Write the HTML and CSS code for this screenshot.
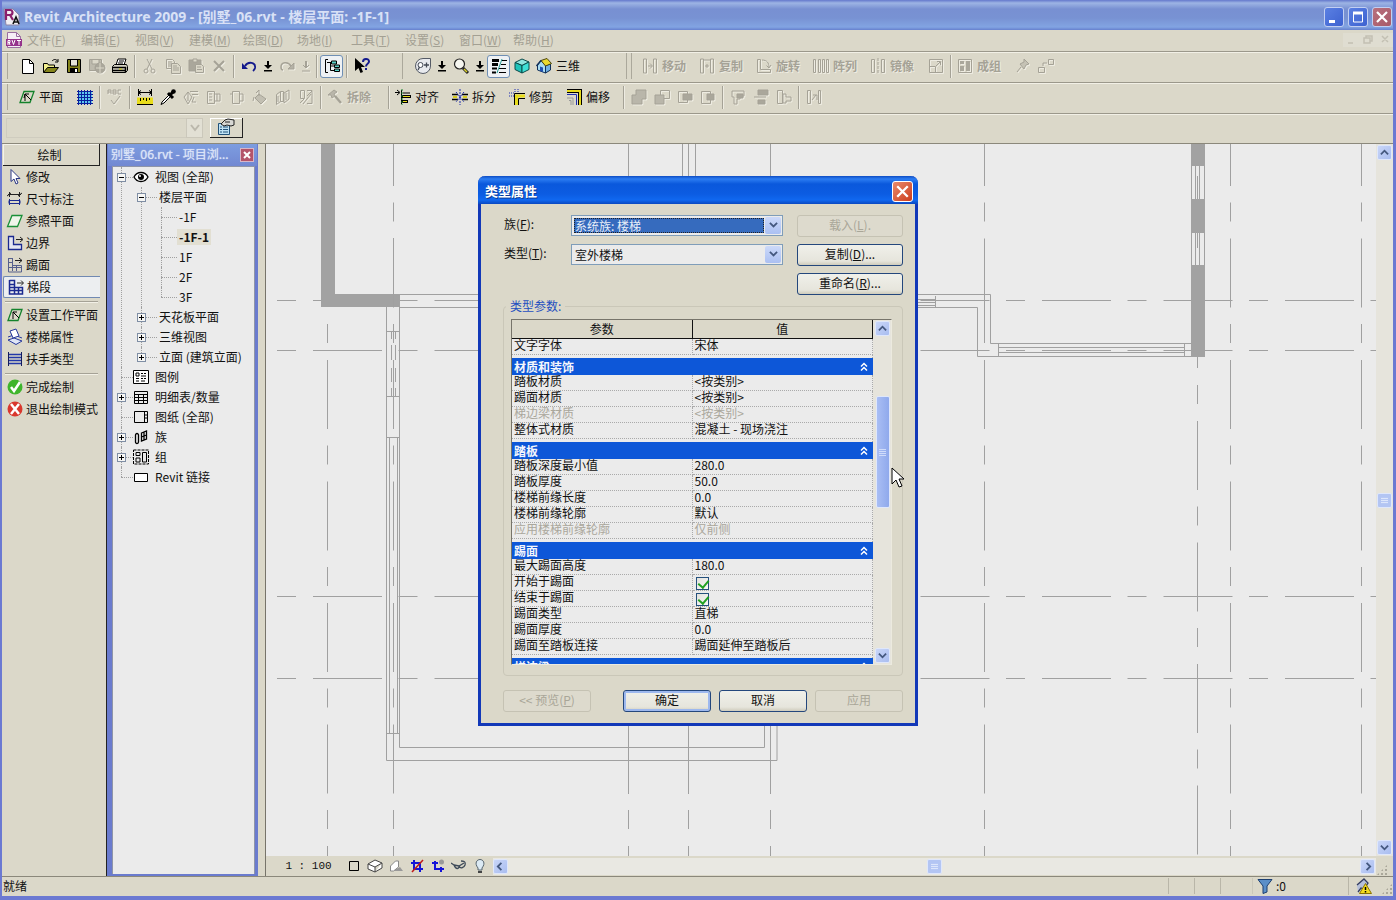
FILE: index.html
```html
<!DOCTYPE html>
<html lang="zh-CN">
<head>
<meta charset="utf-8">
<title>Revit Architecture 2009</title>
<link rel="stylesheet" href="styles.css">
</head>
<body>
<div class="app">
  <header class="titlebar">
    <svg class="ic" viewBox="0 0 18 18"><path d="M1 1h9l6 6v10H3z" fill="#f2f0f4" stroke="#8d86a8"/><path d="M3 12V2h4a2.500 2.500 0 0 1 0 5H3m4 0l3 5" fill="none" stroke="#8c1f6c" stroke-width="2.200"/><path d="M10 16l3-7 3 7m-5-2h4" fill="none" stroke="#111" stroke-width="1.600"/></svg>
    <h1>Revit Architecture 2009 - [别墅_06.rvt - 楼层平面: -1F-1]</h1>
    <button class="winbtn" aria-label="最小化"><svg viewBox="0 0 18 18"><path d="M4 13.500h6" stroke="#fff" stroke-width="3"/></svg></button>
    <button class="winbtn" aria-label="最大化"><svg viewBox="0 0 18 18"><path d="M4.500 5v9h9V5z" fill="none" stroke="#fff"/><path d="M4 5h10" stroke="#fff" stroke-width="3"/></svg></button>
    <button class="winbtn close" aria-label="关闭"><svg viewBox="0 0 18 18"><path d="M4 4l10 10M14 4L4 14" stroke="#fff" stroke-width="2.200"/></svg></button>
  </header>

  <nav class="menubar">
    <svg class="ic" viewBox="0 0 18 18"><path d="M2.500 1.500h9l4 4v11h-13z" fill="#f6eef6" stroke="#9a6fa0"/><path d="M11.500 1.500v4h4" fill="none" stroke="#9a6fa0"/><path d="M1 8h16v7H1z" fill="#96328c"/><path d="M3 14V9.500h2v2H3m1 0l1 2.500M7 9l1.500 4.500L10 9m2 .5h4m-2 0V14" stroke="#fff" fill="none"/></svg>
    <button>文件(<u>F</u>)</button><button>编辑(<u>E</u>)</button><button>视图(<u>V</u>)</button><button>建模(<u>M</u>)</button><button>绘图(<u>D</u>)</button><button>场地(<u>I</u>)</button><button>工具(<u>T</u>)</button><button>设置(<u>S</u>)</button><button>窗口(<u>W</u>)</button><button>帮助(<u>H</u>)</button>
    <span class="mdi">
      <svg viewBox="0 0 50 14"><path d="M5 10h5M21 5h6v5h-6zM23 5V3h6v5h-2M39 3l6 6M45 3l-6 6" fill="none" stroke="#c3c0b3" stroke-width="1.500"/></svg>
    </span>
  </nav>

  <div class="toolbar">
    <div class="group first">
      <button aria-label="新建"><svg class="ic" viewBox="0 0 18 18"><path d="M3.500 2.500h7l4 4v10h-11z" fill="#fff" stroke="#000"/><path d="M10.500 2.500v4h4" fill="none" stroke="#000"/></svg></button>
      <button aria-label="打开"><svg class="ic" viewBox="0 0 18 18"><path d="M1.500 15.500v-9h4l1 1.500h6v3" fill="#f3ef8e" stroke="#000"/><path d="M1.500 15.500l4-5h11l-4 5z" fill="#85851c" stroke="#000"/><path d="M10 4c2-2 4-2 5.500 0M16 2v3h-3" fill="none" stroke="#000"/></svg></button>
      <button aria-label="保存"><svg class="ic" viewBox="0 0 18 18"><path d="M2.500 2.500h13v13h-13z" fill="#85851c" stroke="#000"/><path d="M5 3h8v6H5z" fill="#e5e4da"/><path d="M5 11h8v5H5z" fill="#000"/><path d="M10 12h2v3h-2z" fill="#fff"/><path d="M5.500 3v6h7V3" fill="none" stroke="#000"/></svg></button>
      <button class="off" aria-label="保存到中心"><svg class="ic" viewBox="0 0 18 18"><path d="M1.500 2.500h12v11h-12z" fill="#bdbaad"/><path d="M4 3v4h7V3" fill="#dbd8c9"/><circle cx="12" cy="11" r="5" fill="#aaa79b"/><path d="M8 11h8M12 6v10" stroke="#dbd8c9"/></svg></button>
      <button aria-label="打印"><svg class="ic" viewBox="0 0 18 18"><path d="M5 8l2-6h8l-2 6" fill="#fff" stroke="#000"/><path d="M8 4h5M7 6h5" stroke="#000"/><path d="M1.500 9.500l2-2h12l1 2v4l-2 2h-13z" fill="#d7d4c6" stroke="#000"/><path d="M1.500 10.500h13v5M2 13.500h12" fill="none" stroke="#000" stroke-width="1.500"/><path d="M8 12h3" stroke="#c8c400"/></svg></button>
      <i class="sep"></i>
      <button class="off" aria-label="剪切"><svg class="ic" viewBox="0 0 18 18"><path d="M6 2l5 10M11 2L6 12"/><circle cx="5" cy="14" r="2"/><circle cx="12" cy="14" r="2"/></svg></button>
      <button class="off" aria-label="复制"><svg class="ic" viewBox="0 0 18 18"><path d="M2.500 2.500h6l2 2v7h-8zM4 5h4M4 7h4M4 9h4"/><path d="M7.500 6.500h6l3 3v7h-9z" fill="#dbd8c9"/><path d="M9 9h4M9 11h6M9 13h6"/></svg></button>
      <button class="off" aria-label="粘贴"><svg class="ic" viewBox="0 0 18 18"><path d="M2 3h12v11H2z" fill="#aaa79b"/><path d="M6 2h4v3H6z" fill="#dbd8c9"/><path d="M8.500 7.500h6l2 2v6h-8z" fill="#dbd8c9"/><path d="M10 10h4M10 12.500h5"/></svg></button>
      <button class="off" aria-label="删除"><svg class="ic" viewBox="0 0 18 18"><path d="M4 4l10 10M14 4L4 14" stroke-width="2"/></svg></button>
      <i class="sep"></i>
      <button aria-label="放弃"><svg class="ic" viewBox="0 0 18 18"><path d="M5 9c3-5 11-4 10 2-.3 1.500-1 2-2 3" fill="none" stroke="#141a8c" stroke-width="1.800"/><path d="M2 6v6h6z" fill="#141a8c"/></svg></button>
      <button class="arr" aria-label="放弃列表"><svg class="dn" viewBox="0 0 10 12"><path d="M5 1v6" stroke="#000" stroke-width="2"/><path d="M1 5h8L5 9zM1 10h8v1.500H1z"/></svg></button>
      <button class="off" aria-label="重做"><svg class="ic" viewBox="0 0 18 18"><path d="M13 9c-3-5-10-4-10 1 0 2 1 3 2 3" stroke-width="1.500"/><path d="M16 6v6h-6z" fill="#b5b2a6"/></svg></button>
      <button class="arr off" aria-label="重做列表"><svg class="dn" viewBox="0 0 10 12"><path d="M5 1v6" stroke-width="2"/><path d="M2 5l3 3 3-3M1 11h8"/></svg></button>
      <i class="sep"></i>
      <button class="on" aria-label="项目浏览器"><svg class="ic" viewBox="0 0 18 18"><path d="M5 2.500H2.500v13H5M4 5.500h6M7.500 5.500v8h4M7.500 9h4" fill="none" stroke="#000"/><path d="M8.500 4h5v3h-5zM11.500 8h5v2.500h-5zM11.500 12h5v2.500h-5z" fill="#5ad0c8" stroke="#000"/></svg></button>
      <i class="sep"></i>
      <button aria-label="帮助"><svg class="ic" viewBox="0 0 18 18"><path d="M2 1v13l3.500-3 2 5 2.500-1-2-5h4z" fill="#000"/><path d="M10 5c0-4 6-4 6-.5 0 2.500-3 2-3 5M13 11v2" fill="none" stroke="#141a8c" stroke-width="2"/></svg></button>
    </div>
    <div class="group views">
      <button aria-label="导航控制盘"><svg class="ic" viewBox="0 0 18 18"><path d="M9 1.500h7.500V9A7.500 7.500 0 1 1 9 1.500z" fill="#e8eaee" stroke="#555b66"/><circle cx="6.500" cy="8" r="2.500" fill="#fff" stroke="#444a55"/><path d="M4 13l1.500-3M10 8h5M12.500 5.500v5" stroke="#444a55" stroke-width="1.300"/></svg></button>
      <button class="arr" aria-label="控制盘列表"><svg class="dn" viewBox="0 0 10 12"><path d="M5 1v6" stroke="#000" stroke-width="2"/><path d="M1 5h8L5 9zM1 10h8v1.500H1z"/></svg></button>
      <button aria-label="缩放"><svg class="ic" viewBox="0 0 18 18"><circle cx="7.500" cy="7" r="5" fill="#f6f6f0" stroke="#222" stroke-width="1.200"/><path d="M11 11l5 5" stroke="#222" stroke-width="3"/><path d="M12 12l3 3" stroke="#d8cf2a" stroke-width="1.500"/></svg></button>
      <button class="arr" aria-label="缩放列表"><svg class="dn" viewBox="0 0 10 12"><path d="M5 1v6" stroke="#000" stroke-width="2"/><path d="M1 5h8L5 9zM1 10h8v1.500H1z"/></svg></button>
      <button class="on" aria-label="细线"><svg class="ic" viewBox="0 0 18 18"><path d="M2 3.500h7M2 7.500h6" stroke="#000" stroke-width="3"/><path d="M2 11.500h5M2 15.500h4" stroke="#000" stroke-width="2"/><path d="M11 3.500h6M11 7.500h5M9 11.500h7M9 15.500h7" stroke="#000"/><path d="M12 2L7 16" stroke="#2a9c94"/></svg></button>
      <button aria-label="默认三维视图"><svg class="ic" viewBox="0 0 18 18"><path d="M2 5.500L9 2l7 3-7 3.500z" fill="#8fe6e0" stroke="#0b4a4a"/><path d="M2 5.500l7 3V16l-7-3.500z" fill="#1fc4ba" stroke="#0b4a4a"/><path d="M9 8.500L16 5v7.500L9 16z" fill="#3fe0d6" stroke="#0b4a4a"/></svg></button>
      <button class="lab"><svg class="ic" viewBox="0 0 18 18"><path d="M2.500 8L6 3.500l4.500 5V16l-8-3z" fill="#a9dcf2" stroke="#10305a"/><path d="M10.500 8.500L15.500 7v6l-5 3z" fill="#6fb0e2" stroke="#10305a"/><path d="M6 3.500L12 1.500l4.500 5-6 2.500z" fill="#ead92e" stroke="#4a4410"/><path d="M1.500 9L6 3.500" stroke="#10305a" stroke-width="1.500"/><path d="M5 9.500l3 1v4.500l-3-1z" fill="#1f50b0"/></svg>三维</button>
    </div>
    <div class="group edit">
      <button class="lab off"><svg class="ic" viewBox="0 0 18 18"><path d="M2.500 2v14h3V2zM12.500 2v14h3V2zM7 9h4M9 6.500L11.500 9 9 11.500"/></svg>移动</button>
      <button class="lab off"><svg class="ic" viewBox="0 0 18 18"><path d="M2.500 2v14h3V2zM12.500 2v14h3V2zM7 9h4M9 7v4M6 3h6"/></svg>复制</button>
      <button class="lab off"><svg class="ic" viewBox="0 0 18 18"><path d="M2.500 2.500h3v10h10v3h-13zM7 3c5 0 7 3 7 7M11.500 8.500L14 11l2-3"/></svg>旋转</button>
      <button class="lab off"><svg class="ic" viewBox="0 0 18 18"><path d="M1.500 2.500h2v13h-2zM6.500 2.500h2v13h-2zM10.500 2.500h2v13h-2zM14.500 2.500h2v13h-2z"/></svg>阵列</button>
      <button class="lab off"><svg class="ic" viewBox="0 0 18 18"><path d="M2.500 2.500h3v13h-3zM12.500 2.500h3v13h-3z"/><path d="M9 1v16" stroke-dasharray="3 1"/></svg>镜像</button>
      <button class="off" aria-label="缩放比例"><svg class="ic" viewBox="0 0 18 18"><path d="M2.500 2.500h13v13h-13zM2.500 9.500h6v6M9 9l4-4M10 4.500h3.500V8"/></svg></button>
      <i class="sep"></i>
      <button class="lab off"><svg class="ic" viewBox="0 0 18 18"><path d="M2.500 2.500h13v13h-13z"/><path d="M4 4h4v3H4zM4 9h4v5H4zM10 4h4v10h-4z" fill="#aaa79b" stroke="none"/></svg>成组</button>
      <button class="off" aria-label="锁定"><svg class="ic" viewBox="0 0 18 18"><path d="M10 2l5 5-3 1-2 4-4-5 4-2z" fill="#c5c2b5"/><path d="M7 10l-4 5"/></svg></button>
      <button class="off" aria-label="链接"><svg class="ic" viewBox="0 0 18 18"><path d="M1.500 10.500h6v5h-6zM11.500 2.500h5v5h-5zM6 9V6h4"/></svg></button>
    </div>
  </div>

  <div class="toolbar">
    <div class="group first two">
      <button class="lab"><svg class="ic" viewBox="0 0 18 18"><path d="M6 3.500h10l-4 11H2z" fill="none" stroke="#14822c" stroke-width="1.300"/><path d="M7 13V6m0 0l6 6M7 6h4M7 6l-1 4" stroke="#000" fill="none"/></svg>平面</button>
      <button aria-label="网格"><svg class="ic" viewBox="0 0 18 18"><path d="M2 3h14v12H2z" fill="#5fc8f0"/><path d="M1 3.500h16M1 6.500h16M1 9.500h16M1 12.500h16M1 15.500h16M2.500 2v15M5.500 2v15M8.500 2v15M11.500 2v15M14.500 2v15" stroke="#0a1f9c"/></svg></button>
      <i class="sep"></i>
      <button class="off" aria-label="拼写检查"><svg class="ic" viewBox="0 0 18 18"><path d="M2 6V2h3v4M2 4h3M7 2h3v4H7zM7 4h3M15 2h-3v4h3M5 12l3 4 6-8"/></svg></button>
      <i class="sep"></i>
      <button aria-label="测量"><svg class="ic" viewBox="0 0 18 18"><path d="M1 9.500h16v7H1z" fill="#e8dc1c"/><path d="M2.500 1v7M15.500 1v7M2 4.500h14M5 2.500l-3 2 3 2M13 2.500l3 2-3 2M1 16.500h16M4.500 10v3M7.500 10v2M10.500 10v3M13.500 10v2" fill="none" stroke="#000"/></svg></button>
      <button aria-label="匹配类型"><svg class="ic" viewBox="0 0 18 18"><path d="M10 7L3 14l-1 2.500L5 15l7-7" fill="#fff" stroke="#000"/><path d="M9 5l5 5M11 7l4-4" stroke="#000" stroke-width="3"/><circle cx="14.500" cy="3.500" r="2.300"/></svg></button>
      <button class="off" aria-label="连接端切割"><svg class="ic" viewBox="0 0 18 18"><path d="M2 9l4-5 4 5-4 7zM8 3.500h8M10 6.500h6M6 4v9M12 9l-2 5h4"/></svg></button>
      <button class="off" aria-label="剖切面"><svg class="ic" viewBox="0 0 18 18"><path d="M2.500 3.500h7v12h-7zM10 6h5v7h-5M12 6v7M4 6h3M4 9h3M4 12h3"/></svg></button>
      <button class="off" aria-label="线处理"><svg class="ic" viewBox="0 0 18 18"><path d="M4.500 3.500h7v12h-7zM12 6h3v7h-3M2 6h2"/></svg></button>
      <button class="off" aria-label="填色"><svg class="ic" viewBox="0 0 18 18"><path d="M8 6l7 5-5 5-6-6z" fill="#c2bfb2"/><path d="M8 8V2L5 5M3 9l-1 4"/></svg></button>
      <button class="off" aria-label="拆分面"><svg class="ic" viewBox="0 0 18 18"><path d="M2.500 6.500l4-3v10l-4 3zM6.500 3.500h3v10h-3M10 5l5-3v9l-5 4zM4 8v6M12 5v7"/></svg></button>
      <button class="off" aria-label="贴花"><svg class="ic" viewBox="0 0 18 18"><path d="M3.500 2.500h4v8h-4zM10 2.500h5v13h-5M3 15l4-4M6 16l8-10M10 8l5-5"/></svg></button>
      <i class="sep"></i>
      <button class="lab off"><svg class="ic" viewBox="0 0 18 18"><path d="M2 7l6-5 3 2-3 2 1 2-3 2-1-3z" fill="#b9b6aa"/><path d="M9 8l6 7" stroke-width="2.500"/></svg>拆除</button>
    </div>
    <i class="sep"></i>
    <div class="group plain">
      <button class="lab"><svg class="ic" viewBox="0 0 18 18"><path d="M1 4.500h4M3 2l3 2.500L3 7M7.500 2v14M9 5h7" fill="none" stroke="#000"/><path d="M8 8.500h9M8 13.500h6" stroke="#000" stroke-width="3"/><path d="M9 8.500h7M9 13.500h4" stroke="#e8dc1c"/><path d="M8 1v16" stroke="#14822c" stroke-dasharray="2 1"/></svg>对齐</button>
      <button class="lab"><svg class="ic" viewBox="0 0 18 18"><path d="M1 6.500h6M1 11.500h6M11 6.500h6M11 11.500h6" stroke="#000" stroke-width="1.500"/><path d="M2 9h4M12 9h4" stroke="#d8cc1c" stroke-width="2"/><path d="M9 1v16M5 4l8 10M13 4L5 14" stroke="#1f2fb0" stroke-dasharray="2 1"/></svg>拆分</button>
      <button class="lab"><svg class="ic" viewBox="0 0 18 18"><path d="M6.500 17V5.500H17M10.500 17v-6.500H17" fill="none" stroke="#000"/><path d="M8.500 17V8H17" fill="none" stroke="#e8dc1c" stroke-width="3"/><path d="M1 5h6M1 8h5M7 1v4M10 1v4" stroke="#1f2fb0" stroke-dasharray="1 1"/></svg>修剪</button>
      <button class="lab"><svg class="ic" viewBox="0 0 18 18"><path d="M2 3h13v14" fill="none" stroke="#000" stroke-width="4"/><path d="M2 3h13v14" fill="none" stroke="#e8dc1c" stroke-width="2"/><path d="M2 6.500h9.500V17" fill="none" stroke="#1f2fb0"/><path d="M2 10h6v7M4 12.500h2V17" fill="none" stroke="#999"/></svg>偏移</button>
    </div>
    <i class="sep"></i>
    <div class="group plain off">
      <button class="off" aria-label="连接几何图形"><svg class="ic" viewBox="0 0 18 18"><path d="M6 2h10v9h-4v5H2V7h4z" fill="#b9b6aa"/></svg></button>
      <button class="off" aria-label="取消连接"><svg class="ic" viewBox="0 0 18 18"><path d="M2 7h9v9H2z" fill="#b9b6aa"/><path d="M7.500 7V2.500h9v8H11"/></svg></button>
      <button class="off" aria-label="切割"><svg class="ic" viewBox="0 0 18 18"><path d="M2.500 3.500h9v11h-9z"/><path d="M7 6h9v6H7z" fill="#aaa79b"/></svg></button>
      <button class="off" aria-label="取消切割"><svg class="ic" viewBox="0 0 18 18"><path d="M2.500 3.500h9v12h-9z"/><path d="M8 6h7v6H8z" fill="#aaa79b"/></svg></button>
      <i class="sep"></i>
      <button class="off" aria-label="墙连接"><svg class="ic" viewBox="0 0 18 18"><path d="M3 3h12v5h-4v3H8v5H5V9H3z"/><path d="M8 6h6v4H8z" fill="#aaa79b"/></svg></button>
      <button class="off" aria-label="附着"><svg class="ic" viewBox="0 0 18 18"><path d="M6 2h10v5H6zM6 12h7v4H6z" fill="#aaa79b"/><path d="M2 9h12"/></svg></button>
      <button class="off" aria-label="分离"><svg class="ic" viewBox="0 0 18 18"><path d="M2.500 2.500h5v13h-5zM8 6h3v3l5 0v4h-5v2H8z"/></svg></button>
      <i class="sep"></i>
      <button class="off" aria-label="间隙"><svg class="ic" viewBox="0 0 18 18"><path d="M2.500 2.500h3v13h-3zM13.500 2.500h2v13h-2zM7 12l4-5M8 7h4v5"/></svg></button>
    </div>
  </div>

  <div class="optionsbar">
    <select disabled aria-label="类型选择器"><option></option></select>
    <span class="chev"><svg viewBox="0 0 10 8"><path d="M1 1l4 5 4-5" fill="none" stroke="#bbb8ac" stroke-width="2"/></svg></span>
    <button class="props" aria-label="属性"><svg class="ic" viewBox="0 0 18 18"><path d="M1.500 5.500h11v11h-11z" fill="#bfe2f4" stroke="#22527a"/><path d="M3 9h2M6 9h5M3 11.500h2M6 11.500h5M3 14h2M6 14h5" stroke="#22527a"/><path d="M4 6l4-4 3-1 6 1v5l-3 1-4-1-3 1z" fill="#d8d8d4" stroke="#222"/><path d="M8 4h5" stroke="#222"/></svg></button>
  </div>

  <main class="work">
    <aside class="design">
      <h2>绘制</h2>
      <button><svg class="ic" viewBox="0 0 18 18"><path d="M5 1.500v12l3-2.500 2 5 2-1-2-4.500h4z" fill="#fff" stroke="#2a3684"/></svg>修改</button>
      <button><svg class="ic" viewBox="0 0 18 18"><path d="M2 4.500h13M3.500 2v5M13.500 2v5M1 6l4-3M12 6l4-3" stroke="#222" fill="none"/><path d="M3.500 9v6M13.500 9v6M3 10.500h11v3H3z" stroke="#1b2a90" fill="none"/></svg>尺寸标注</button>
      <button><svg class="ic" viewBox="0 0 18 18"><path d="M6 3.500h10l-4.500 11h-10z" fill="#f0f5ea" stroke="#1a9038" stroke-width="1.300"/></svg>参照平面</button>
      <button><svg class="ic" viewBox="0 0 18 18"><path d="M2.500 2.500h5v8h8v5h-13z" fill="#e4e6f2" stroke="#1b2a90" stroke-width="1.300"/><path d="M10 5.500h6M14 3l3 2.500L14 8" fill="none" stroke="#222"/></svg>边界</button>
      <button><svg class="ic" viewBox="0 0 18 18"><path d="M2.500 2v14h13V9.500h-9V2M2 6.500h4M2 11.500h13M10.500 9v6M6.500 9v6M3 2.500h4" fill="none" stroke="#56608c"/><path d="M9 4.500h7M13 2l3 2.500-3 2.500" fill="none" stroke="#222"/></svg>踢面</button>
      <button class="sel"><svg class="ic" viewBox="0 0 18 18"><path d="M2.500 2v14h13V9.500h-8V2.500h-5M2 6.500h5M2 9.500h5M2 12.500h13M7.500 9v7M11.500 9v7" fill="none" stroke="#1b2a90" stroke-width="1.500"/><path d="M10 5h6M14 2.500L16.500 5 14 7.500" fill="none" stroke="#222"/></svg>梯段</button>
      <hr>
      <button><svg class="ic" viewBox="0 0 18 18"><path d="M6 3.500h10l-4 11H2z" fill="none" stroke="#14822c" stroke-width="1.300"/><path d="M7 13V6m0 0l6 6M7 6h4" stroke="#000" fill="none"/></svg>设置工作平面</button>
      <button><svg class="ic" viewBox="0 0 18 18"><path d="M2 12l6-2 8 3-6 3.500zM2 9l6-2 8 3" fill="#dfe6f6" stroke="#26389c"/><path d="M4 3l6-2 3 7-6 2z" fill="#fff" stroke="#26389c"/></svg>楼梯属性</button>
      <button><svg class="ic" viewBox="0 0 18 18"><path d="M2 4.500h14M2 7.500h14M2 10.500h14M2 13.500h14" stroke="#2338a8" stroke-width="1.500"/><path d="M2.500 2v14M15.500 2v14" stroke="#141c5c"/></svg>扶手类型</button>
      <hr>
      <button><svg class="ic" viewBox="0 0 18 18"><circle cx="9" cy="9" r="7.500" fill="#3fb52c"/><path d="M5 9l3 4 6-9" fill="none" stroke="#fff" stroke-width="2.500"/></svg>完成绘制</button>
      <button><svg class="ic" viewBox="0 0 18 18"><circle cx="9" cy="9" r="7.500" fill="#d9382e"/><path d="M5 4l8 10M13 4L5 14" stroke="#fff" stroke-width="2.500"/></svg>退出绘制模式</button>
    </aside>

    <aside class="browser">
      <header><h2>别墅_06.rvt - 项目浏...</h2><button aria-label="关闭"><svg viewBox="0 0 12 12"><path d="M3 3l6 6M9 3L3 9" stroke="#fff" stroke-width="2"/></svg></button></header>
      <ul class="tree">
        <li><div class="row"><button class="tg open" aria-label="折叠"></button><svg class="ti" viewBox="0 0 16 16"><path d="M1 8c3-6 11-6 14 0-3 6-11 6-14 0z" fill="#fff" stroke="#000" stroke-width="1.300"/><circle cx="8" cy="8" r="3"/><circle cx="7" cy="7" r="1" fill="#fff"/></svg>视图 (全部)</div>
          <ul>
            <li><div class="row"><button class="tg open" aria-label="折叠"></button>楼层平面</div>
              <ul class="leaf">
                <li><div class="row">-1F</div></li>
                <li><div class="row"><b>-1F-1</b></div></li>
                <li><div class="row">1F</div></li>
                <li><div class="row">2F</div></li>
                <li><div class="row">3F</div></li>
              </ul>
            </li>
            <li><div class="row"><button class="tg" aria-label="展开"></button>天花板平面</div></li>
            <li><div class="row"><button class="tg" aria-label="展开"></button>三维视图</div></li>
            <li><div class="row"><button class="tg" aria-label="展开"></button>立面 (建筑立面)</div></li>
          </ul>
        </li>
        <li><div class="row nt"><svg class="ti" viewBox="0 0 16 16"><path d="M.5 1.500h15v13H.5z" fill="#fff" stroke="#000"/><path d="M3 4h3v3H3zM3 9.500h3M3 12h3M8 4.500h2M11 4.500h2M8 7h5M8 9.500h2M11 9.500h2M8 12h4" fill="none" stroke="#000"/></svg>图例</div></li>
        <li><div class="row"><button class="tg" aria-label="展开"></button><svg class="ti" viewBox="0 0 16 16"><path d="M1.500 2.500h13v12h-13zM1.500 5.500h13M1.500 8.500h13M1.500 11.500h13M5.500 5v9M10.500 5v9" fill="none" stroke="#000"/></svg>明细表/数量</div></li>
        <li><div class="row nt"><svg class="ti" viewBox="0 0 16 16"><path d="M1.500 2.500h13v11h-13zM11.500 2.500v11M12 6h2M12 9h2" fill="none" stroke="#000"/></svg>图纸 (全部)</div></li>
        <li><div class="row"><button class="tg" aria-label="展开"></button><svg class="ti" viewBox="0 0 16 16"><path d="M2.500 6c0-2 3-2 3 0v7c0 2-3 2-3 0zM8.500 4l5-2v8l-5 2zM11 3v8M8.500 8l5-2" fill="none" stroke="#000" stroke-width="1.300"/></svg>族</div></li>
        <li><div class="row"><button class="tg" aria-label="展开"></button><svg class="ti" viewBox="0 0 16 16"><path d="M.5 1h15v14H.5z" fill="none" stroke="#000" stroke-dasharray="3 1"/><path d="M3 3.500h4v3H3zM3 9h4v4H3zM9.500 3.500h4V13h-4z" fill="none" stroke="#000"/></svg>组</div></li>
        <li><div class="row nt"><svg class="ti" viewBox="0 0 16 16"><path d="M1.500 4.500h13v8h-13z" fill="#fff" stroke="#000"/></svg>Revit 链接</div></li>
      </ul>
    </aside>

    <section class="view">
      <div class="canvas">
        <svg class="plan" aria-hidden="true">
          <g transform="translate(-266 -144)">
            <g class="axis">
              <path d="M327.500 324V980M393.500 81V980M628.500 81V980M688.500 81V980M770.500 81V980M984.500 81V980M1230.500 81V980M1361.500 81V980"/>
              <path d="M1197.500 385V980"/>
              <path d="M277 300.500H1900M277 350.500H1900M277 596.500H1900M277 678.500H1900"/>
            </g>
            <path class="wall" d="M321 144h14v150h65v13h-79zM1191 144h14v22h-14zM1191 199h14v34h-14zM1191 265h14v92h-14z"/>
            <path class="gap" d="M1191 166h14v33h-14zM1191 233h14v32h-14z"/>
            <path class="line" d="M1191.500 166v33M1195.500 166v33M1199.500 166v33M1204.500 166v33M1191.500 233v32M1195.500 233v32M1199.500 233v32M1204.500 233v32M1197.500 176v23M1197.500 233v15M1197.500 357v11
              M400 294.500h590.500v49h201M400 307.500h577.500v49h213.500M998.500 343v13M1184.500 343v13M998 347.500h186M998 352.500h186
              M918 299.500h17M918 302.500h17M918 305.500h17M935.500 296v11
              M386.500 307v453.500h390.500v-40M399.500 307v440.500h365v-30M386 331.500h13M386 396.500h13M386 437.500h13M386 733.500h13
              M391.500 331v8M395.500 331v8M391.500 345v15M395.500 345v15M391.500 368v14M395.500 368v14M391.500 388v8M395.500 388v8M393.500 238v69M389.500 437v296M397.500 437v296
              M682.500 144v40M688.500 144v40M695.500 144v40M628.500 720v74M688.500 720v74M770.500 720v74M984.500 300v42"/>
          </g>
        </svg>
      </div>
      <div class="vscroll"><button aria-label="向上"><svg viewBox="0 0 10 8"><path d="M1 6l4-4 4 4"/></svg></button><span class="thumb"></span><button aria-label="向下"><svg viewBox="0 0 10 8"><path d="M1 2l4 4 4-4"/></svg></button></div>
      <div class="viewbar">
        <button class="scale">1 : 100</button>
        <button aria-label="详细程度"><svg class="ti" viewBox="0 0 16 16"><path d="M3.500 3.500h9v9h-9z" fill="none" stroke="#000"/></svg></button>
        <button aria-label="模型图形样式"><svg class="ti" viewBox="0 0 16 16"><path d="M1 6l7-4 7 3-7 4zM1 6v5l7 3V9M8 14l7-4V5" fill="#fff" stroke="#444"/></svg></button>
        <button aria-label="阴影"><svg class="ti" viewBox="0 0 16 16"><path d="M5 13h10l-3-4z" fill="#999"/><path d="M2.500 13V8l5-5h3v6l-5 4z" fill="#fff" stroke="#888"/></svg></button>
        <button aria-label="裁剪区域"><svg class="ti" viewBox="0 0 16 16"><path d="M5 2v9h9M2 5h9v9" fill="none" stroke="#1414d8" stroke-width="2"/><path d="M3 14L14 2" stroke="#c01818" stroke-width="1.500"/></svg></button>
        <button aria-label="显示裁剪区域"><svg class="ti" viewBox="0 0 16 16"><path d="M5 3v8h9M2 5h6M11 9v5" fill="none" stroke="#1414d8" stroke-width="2"/><circle cx="11.500" cy="4" r="2.500" fill="#999"/></svg></button>
        <button aria-label="临时隐藏"><svg class="ti" viewBox="0 0 16 16"><path d="M0 5l3 2M3 7c2 5 5 4 5 1 1 3 5 2 6-1 1-4-2-4-4-4M3 7l5 1 5-3" fill="none" stroke="#3e4a58" stroke-width="1.300"/></svg></button>
        <button aria-label="显示隐藏图元"><svg class="ti" viewBox="0 0 16 16"><path d="M6 10C2 5 5 1.500 8 1.500S14 5 10 10v2H6z" fill="#dceaf4" stroke="#56646e"/><path d="M6 14h4" stroke="#444" stroke-width="2"/></svg></button>
        <div class="hscroll"><button aria-label="向左"><svg viewBox="0 0 10 10"><path d="M6 1L2 5l4 4"/></svg></button><span class="thumb"></span><button aria-label="向右"><svg viewBox="0 0 10 10"><path d="M4 1l4 4-4 4"/></svg></button></div>
      </div>
      <span class="grip"></span>
    </section>
  </main>

  <footer class="status">
    <span class="msg">就绪</span>
    <i></i><i></i><i></i>
    <span class="filter"><svg class="ti" viewBox="0 0 16 16"><path d="M1 1.500h14L10 8v6l-4 1.500V8z" fill="#5b8fc8" stroke="#1d3f70"/></svg>:0</span>
    <span class="warn"><svg class="ic" viewBox="0 0 18 18"><path d="M3 8l7-6 4 4-4 6-3-1-3 4" fill="#b5bfd8" stroke="#333c60" stroke-width="1.300"/><path d="M11.500 6.500l6 10h-12z" fill="#f5dc1e" stroke="#8a7400"/><path d="M11.500 10v3M11.500 14v1.500" stroke="#000" stroke-width="1.500"/></svg></span>
    <span class="grip"></span>
  </footer>
</div>

<section class="dialog" role="dialog" aria-labelledby="dlg-title">
  <header><h2 id="dlg-title">类型属性</h2><button aria-label="关闭"><svg viewBox="0 0 18 18"><path d="M4 4l10 10M14 4L4 14" stroke="#fff" stroke-width="2.200"/></svg></button></header>
  <form class="body">
    <div class="fields">
      <label for="family">族(<u>F</u>):</label>
      <div class="combo active"><select id="family"><option>系统族: 楼梯</option></select><span><svg viewBox="0 0 10 8"><path d="M1 1l4 4 4-4"/></svg></span></div>
      <button type="button" disabled>载入(<u>L</u>).</button>
      <label for="type">类型(<u>T</u>):</label>
      <div class="combo"><select id="type"><option>室外楼梯</option></select><span><svg viewBox="0 0 10 8"><path d="M1 1l4 4 4-4"/></svg></span></div>
      <button type="button">复制(<u>D</u>)...</button>
      <button type="button" class="rename">重命名(<u>R</u>)...</button>
    </div>
    <fieldset>
      <legend>类型参数:</legend>
      <div class="grid">
        <div class="clip">
          <table>
            <thead><tr><th>参数</th><th>值</th></tr></thead>
            <tbody>
              <tr><td>文字字体</td><td>宋体</td></tr>
              <tr class="space"><td colspan="2"></td></tr>
              <tr class="cat"><th colspan="2"><span>材质和装饰<svg viewBox="0 0 8 10"><path d="M1 4.500l3-3 3 3M1 8.500l3-3 3 3"/></svg></span></th></tr>
              <tr><td>踏板材质</td><td>&lt;按类别&gt;</td></tr>
              <tr><td>踢面材质</td><td>&lt;按类别&gt;</td></tr>
              <tr class="dim"><td>梯边梁材质</td><td>&lt;按类别&gt;</td></tr>
              <tr><td>整体式材质</td><td>混凝土 - 现场浇注</td></tr>
              <tr class="space"><td colspan="2"></td></tr>
              <tr class="cat"><th colspan="2"><span>踏板<svg viewBox="0 0 8 10"><path d="M1 4.500l3-3 3 3M1 8.500l3-3 3 3"/></svg></span></th></tr>
              <tr><td>踏板深度最小值</td><td>280.0</td></tr>
              <tr><td>踏板厚度</td><td>50.0</td></tr>
              <tr><td>楼梯前缘长度</td><td>0.0</td></tr>
              <tr><td>楼梯前缘轮廓</td><td>默认</td></tr>
              <tr class="dim"><td>应用楼梯前缘轮廓</td><td>仅前侧</td></tr>
              <tr class="space"><td colspan="2"></td></tr>
              <tr class="cat"><th colspan="2"><span>踢面<svg viewBox="0 0 8 10"><path d="M1 4.500l3-3 3 3M1 8.500l3-3 3 3"/></svg></span></th></tr>
              <tr><td>最大踢面高度</td><td>180.0</td></tr>
              <tr><td><label for="r1">开始于踢面</label></td><td><input type="checkbox" id="r1" checked></td></tr>
              <tr><td><label for="r2">结束于踢面</label></td><td><input type="checkbox" id="r2" checked></td></tr>
              <tr><td>踢面类型</td><td>直梯</td></tr>
              <tr><td>踢面厚度</td><td>0.0</td></tr>
              <tr><td>踢面至踏板连接</td><td>踢面延伸至踏板后</td></tr>
              <tr class="space"><td colspan="2"></td></tr>
              <tr class="cat"><th colspan="2"><span>梯边梁<svg viewBox="0 0 8 10"><path d="M1 4.500l3-3 3 3M1 8.500l3-3 3 3"/></svg></span></th></tr>
            </tbody>
          </table>
        </div>
        <div class="vscroll"><button type="button" aria-label="向上"><svg viewBox="0 0 10 8"><path d="M1 6l4-4 4 4"/></svg></button><span class="thumb"></span><button type="button" aria-label="向下"><svg viewBox="0 0 10 8"><path d="M1 2l4 4 4-4"/></svg></button></div>
      </div>
    </fieldset>
    <div class="actions">
      <button type="button" disabled class="preview">&lt;&lt; 预览(<u>P</u>)</button>
      <button type="button" class="default">确定</button>
      <button type="button">取消</button>
      <button type="button" disabled>应用</button>
    </div>
  </form>
</section>
<svg class="cursor" viewBox="0 0 13 21"><path d="M1 1v16l4-4 3 7 3-1-3-7h5z" fill="#fff" stroke="#000"/></svg>
</body>
</html>
```
FILE: styles.css
```css
* { box-sizing: border-box; }
body {
  margin: 0;
  background: #dbd8c9;
  color: #111;
  font: 12px/16px "Noto Sans CJK SC", sans-serif;
}
button, select, input { font: inherit; color: inherit; margin: 0; }
button { padding: 0; border: 0; background: none; }
h1, h2 { margin: 0; }
svg { display: block; flex: none; }
.ic { width: 18px; height: 18px; }
.ti { width: 16px; height: 16px; }

.app {
  min-height: 100vh;
  display: flex;
  flex-direction: column;
  border: solid #6b79d2;
  border-width: 0 3px 4px 2px;
}

/* Title bar and menus */
.titlebar {
  height: 30px;
  display: flex;
  align-items: center;
  gap: 3px;
  padding: 3px 1px 0 1px;
  background: linear-gradient(#6478cc 0, #9db4e4 3px, #7890d2 9px, #7892d3 18px, #82a4e2 27px, #6680ce 30px);
}
.titlebar h1 {
  flex: 1;
  color: #d9e1f6;
  font: bold 14px/18px "Noto Sans", "Noto Sans CJK SC", sans-serif;
}
.winbtn {
  width: 20px;
  height: 20px;
  margin-left: 1px;
  border: 1px solid #c2cff2;
  border-radius: 3px;
  background: linear-gradient(135deg, #5b80e2, #3d62d0);
}
.winbtn.close { background: linear-gradient(135deg, #b8707e, #a85a68); }
.winbtn svg { width: 18px; height: 18px; }
.menubar {
  height: 21px;
  display: flex;
  align-items: center;
  gap: 13px;
  padding: 0 0 2px 3px;
  color: #a3a093;
}
.menubar .ic { margin-right: -9px; }
.menubar button { width: 41px; text-align: left; white-space: nowrap; }
.mdi { margin-left: auto; background: #dfddd1; }
.mdi svg { width: 50px; height: 14px; }

/* Toolbars */
.toolbar {
  height: 31px;
  display: flex;
  align-items: center;
  padding-bottom: 2px;
  border-top: 1px solid #9b988b;
  box-shadow: inset 0 1px #f2f0e6;
}
.group { display: flex; align-items: center; height: 26px; }
.group.first { padding-left: 8px; margin-left: 5px; padding-right: 29px; border-left: 1px solid #aba89b; }
.group.two { padding-right: 4px; }
.group.views { padding: 0 36px 0 8px; margin-right: 4px; border: solid #aba89b; border-width: 0 1px; }
.group.edit { padding-left: 7px; border-left: 1px solid #aba89b; }
.toolbar button {
  width: 23px;
  height: 23px;
  display: flex;
  align-items: center;
  justify-content: center;
  white-space: nowrap;
}
.toolbar button.arr { width: 15px; }
.toolbar button.lab { width: auto; gap: 3px; padding: 0 10px 0 2px; }
.toolbar button.on { border: 1px solid #6f8fb4; border-radius: 3px; background: #eef1f4; }
.toolbar button.off { color: #a5a296; font-weight: bold; text-shadow: 1px 1px #eeece2; }
.off svg { fill: none; stroke: #a5a296; filter: drop-shadow(1px 1px #eeece2); }
.dn { width: 10px; height: 12px; }
.sep { width: 1px; height: 23px; margin: 0 3px; background: #a5a296; box-shadow: 1px 0 #eeece2; flex: none; }
.optionsbar {
  height: 30px;
  display: flex;
  align-items: center;
  padding: 0 4px 2px;
  border-top: 1px solid #9b988b;
  box-shadow: inset 0 1px #f2f0e6;
}
.optionsbar select {
  width: 180px;
  height: 20px;
  appearance: none;
  border: 1px solid #cbc8bb;
  border-right: 0;
  background: #dbd8c9;
}
.chev {
  width: 17px;
  height: 20px;
  display: grid;
  place-items: center;
  border: 1px solid #cbc8bb;
  background: #e2e0d4;
}
.chev svg { width: 10px; height: 8px; }
.props {
  width: 33px;
  height: 20px;
  margin-left: 7px;
  display: grid;
  place-items: center;
  border: solid #222;
  border-width: 0 1px 1px 0;
  box-shadow: inset 1px 1px #fff;
}

/* Work area */
.work { flex: 1; display: flex; min-height: 0; border-top: 1px solid #8b887b; }
.design { width: 97px; margin: 0 7px 0 1px; flex: none; }
.design h2 {
  height: 22px;
  padding-right: 3px;
  font: 12px/21px "Noto Sans CJK SC", sans-serif;
  text-align: center;
  border: solid #222;
  border-width: 0 1px 1px 0;
  box-shadow: inset 1px 1px #f4f2ea;
}
.design button {
  width: 100%;
  height: 22px;
  display: flex;
  align-items: center;
  gap: 2px;
  padding-left: 3px;
  white-space: nowrap;
}
.design button.sel { border: 1px solid #7089b2; border-right: 0; background: #eceef0; border-radius: 2px 0 0 2px; }
.design hr { height: 1px; margin: 3px 2px 2px; border: 0; background: #a5a296; box-shadow: 0 1px #f2f0e6; }
.browser {
  width: 151px;
  flex: none;
  display: flex;
  flex-direction: column;
  border: solid #6a7bce;
  border-width: 0 3px 2px 5px;
  box-shadow: -1px 0 #222;
}
.browser header {
  height: 22px;
  display: flex;
  align-items: center;
  margin: 0 -2px 0 -4px;
  padding: 0 3px;
  background: linear-gradient(#7d9de0, #7288d2);
}
.browser h2 { flex: 1; color: #dbe3f7; font: 12px/16px "Noto Sans", "Noto Sans CJK SC", sans-serif; white-space: nowrap; text-shadow: 0 0 1px #dbe3f7; }
.browser header button { width: 14px; height: 14px; background: #b4546a; border: 1px solid #d8b6c8; }
.tree { flex: 1; background: #ebebeb; border: 1px solid #8f95a8; border-bottom: 0; padding: 0 0 0 4px; }
ul { list-style: none; margin: 0; padding: 0; }
.tree ul { margin-left: 20px; }
.tree li { position: relative; }
.tree li::before {
  content: "";
  position: absolute;
  inset: 0 auto 0 4px;
  border-left: 1px dotted #a0a0a0;
}
.tree li:last-child::before { bottom: auto; height: 10px; }
.row { position: relative; display: flex; align-items: center; height: 20px; white-space: nowrap; }
.row::before { content: ""; position: absolute; left: 4px; top: 10px; width: 12px; border-top: 1px dotted #a0a0a0; }
.tree ul .row::before { width: 16px; }
.row .ti { margin-right: 6px; }
.nt { padding-left: 16px; }
.leaf .row { padding-left: 22px; }
.leaf b { padding: 0 2px; margin-left: -2px; background: #e2dfd2; }
.tg {
  position: relative;
  width: 9px;
  height: 9px;
  margin-right: 7px;
  border: 1px solid #7f8ea4;
  background: linear-gradient(#000, #000) center / 5px 1px no-repeat, linear-gradient(#000, #000) center / 1px 5px no-repeat, #f6f6f4;
}
.tg.open { background: linear-gradient(#000, #000) center / 5px 1px no-repeat, #f6f6f4; }
.tree ul .tg { margin-right: 13px; }

.view {
  flex: 1;
  min-width: 0;
  margin-left: 7px;
  display: grid;
  grid-template: 1fr 20px / 1fr 17px;
  border-left: 1px solid #77746a;
}
.canvas { position: relative; overflow: hidden; background: #ebebeb; }
.plan { position: absolute; inset: 0; width: 100%; height: 100%; }
.axis path { fill: none; stroke: #a0a0a0; stroke-dasharray: 19 17 69 16.5; }
.wall { fill: #a2a2a2; }
.gap { fill: #ebebeb; }
.line { fill: none; stroke: #a0a0a0; }
.vscroll, .hscroll { display: flex; justify-content: space-between; background: #e6e4dc; }
.vscroll { flex-direction: column; align-items: center; padding: 1px 0; }
.vscroll button, .hscroll button, .thumb {
  width: 15px;
  height: 15px;
  display: grid;
  place-items: center;
  border: 1px solid #dfe7fb;
  border-radius: 2px;
  background: linear-gradient(135deg, #c9d6f8, #a9bdf0);
}
.vscroll svg, .hscroll svg, .combo svg { width: 9px; height: 9px; fill: none; stroke: #44587f; stroke-width: 2; }
.view .thumb { background: repeating-linear-gradient(#b7c8f4 0 1px, #dde6fb 1px 2px) center / 7px 7px no-repeat, #b3c5f3; }
.viewbar { display: flex; align-items: center; padding-left: 19px; }
.viewbar button { margin-right: 5px; }
.viewbar .scale { margin-right: 14px; min-width: 47px; font: 11px/16px "Liberation Mono", monospace; white-space: nowrap; }
.hscroll { flex: 1; padding: 1px 1px 1px 0; background: #e9e8e2; }
.viewbar .hscroll button { margin: 0; }
.grip {
  width: 12px;
  height: 12px;
  align-self: end;
  background: radial-gradient(#aaa79a 1px, transparent 1px) 0 0 / 4px 4px;
  clip-path: polygon(100% 0, 100% 100%, 0 100%);
}
.status { height: 20px; display: flex; align-items: center; padding: 0 0 1px 1px; border-top: 1px solid #8b887b; }
.msg { flex: 1; }
.status i { width: 26px; height: 16px; border-left: 1px solid #b9b6a8; }
.status i:nth-of-type(3) { width: 32px; }
.filter { display: flex; align-items: center; gap: 3px; width: 96px; padding-left: 4px; border-left: 1px solid #cbc8ba; }
.warn { border-left: 1px solid #b9b6a8; padding-left: 5px; margin-right: 9px; }

/* Type properties dialog */
.dialog {
  position: absolute;
  left: 478px;
  top: 176px;
  width: 440px;
  border: solid #1238b8;
  border-width: 0 3px 3px;
  border-radius: 7px 7px 0 0;
  background: #dbd8c9;
}
.dialog header {
  height: 28px;
  display: flex;
  align-items: center;
  margin: 0 -3px;
  padding: 2px 5px 0 7px;
  border-radius: 7px 7px 0 0;
  background: linear-gradient(#0d4cc4 0, #2c7df2 3px, #0a58dc 8px, #0c5ce2 18px, #1068f0 24px, #0a48c0 28px);
}
.dialog h2 { flex: 1; color: #fff; font: bold 13px/18px "Noto Sans CJK SC", sans-serif; text-shadow: 1px 1px #0b3a94; }
.dialog header button { width: 21px; height: 21px; border: 1px solid #fff; border-radius: 3px; background: linear-gradient(135deg, #e88a6c, #cc3c1c); }
.dialog header svg { width: 19px; height: 19px; }
.body { padding: 11px 12px 11px 22px; }
.fields { display: grid; grid-template-columns: 67px 1fr 120px; row-gap: 8px; padding-left: 1px; }
.fields label { align-self: center; margin-top: -3px; }
.fields button { margin-left: 14px; width: 106px; }
.fields .rename { grid-column: 3; }
.body > .fields > button, .actions button {
  height: 22px;
  margin-bottom: -1px;
  padding-bottom: 2px;
  border: 1px solid #24477c;
  border-radius: 3px;
  background: linear-gradient(#f0f0ea, #e6e5dc 80%, #cfccbc);
}
.body button:disabled { border-color: #c5c2b3 !important; background: #dddacd !important; color: #a9a698; }
.combo { height: 21px; display: flex; padding: 1px; border: 1px solid #7f9db9; background: #ebebeb; }
.combo select { flex: 1; min-width: 0; appearance: none; border: 0; border-radius: 0; background: none; padding: 0 2px; outline: 0; line-height: 15px; }
.combo.active select { margin: 1px; padding: 0; background: #366bbe; color: #e8eef8; border: 1px dotted #222; line-height: 13px; }
.combo span { width: 16px; display: grid; place-items: center; background: linear-gradient(#ccd9f9, #abc0f2); border-radius: 2px; }
fieldset { margin: 5px 0 0; padding: 6px 10px 10px 7px; border: 1px solid #cac7b8; border-radius: 4px; min-width: 0; }
legend { margin-left: -5px; padding: 0 4px; line-height: 14px; color: #1f4fc0; }
.grid { display: flex; height: 346px; border: 1px solid; border-color: #77746a #eceadf #eceadf #77746a; }
.clip { flex: 1; overflow: hidden; }
table { width: 100%; table-layout: fixed; border-spacing: 0; background: #ebebeb; }
thead th { height: 19px; padding: 0; font-weight: normal; line-height: 16px; background: #dbd8c9; border: solid #111; border-width: 0 1px 1px 0; }
td { height: 16px; padding: 0 2px 3px; line-height: 12px; border: dotted #aaa; border-width: 0 1px 1px 0; white-space: nowrap; }
td label { display: block; }
.space td { height: 3px; padding: 0; border-bottom: 0; line-height: 0; }
.cat th { height: 17px; padding: 0 5px 0 2px; background: #0d57d8; color: #f4f6fc; text-align: left; line-height: 16px; }
.cat span { display: flex; align-items: center; justify-content: space-between; }
.cat svg { width: 8px; height: 10px; fill: none; stroke: #fff; stroke-width: 1.500px; }
.dim { color: #aaa79c; }
td input { display: block; appearance: none; width: 13px; height: 13px; margin: 2px 1px -3px; border: 1px solid #24507c; background: linear-gradient(135deg, #e2e2dc, #f8f8f8); position: relative; }
td input::after { content: ""; position: absolute; left: 3px; top: 0; width: 5px; height: 8px; border: solid #21a121; border-width: 0 2px 2px 0; transform: rotate(40deg); }
.grid .vscroll { width: 18px; padding-left: 1px; justify-content: flex-start; }
.grid .thumb {
  width: 14px;
  height: 112px;
  margin: 60px 0 auto;
  background: repeating-linear-gradient(#d0dcfa 0 1px, transparent 1px 2px) center / 7px 7px no-repeat, linear-gradient(90deg, #a9bef4, #8fa9ec);
}
.actions { display: flex; gap: 8px; margin-top: 14px; }
.actions button { width: 88px; margin: 0; }
.actions .preview { margin-right: auto; }
.actions .default { box-shadow: inset 0 0 0 2px #9db8ee; }
.cursor { position: absolute; left: 891px; top: 467px; width: 13px; height: 21px; }
```
